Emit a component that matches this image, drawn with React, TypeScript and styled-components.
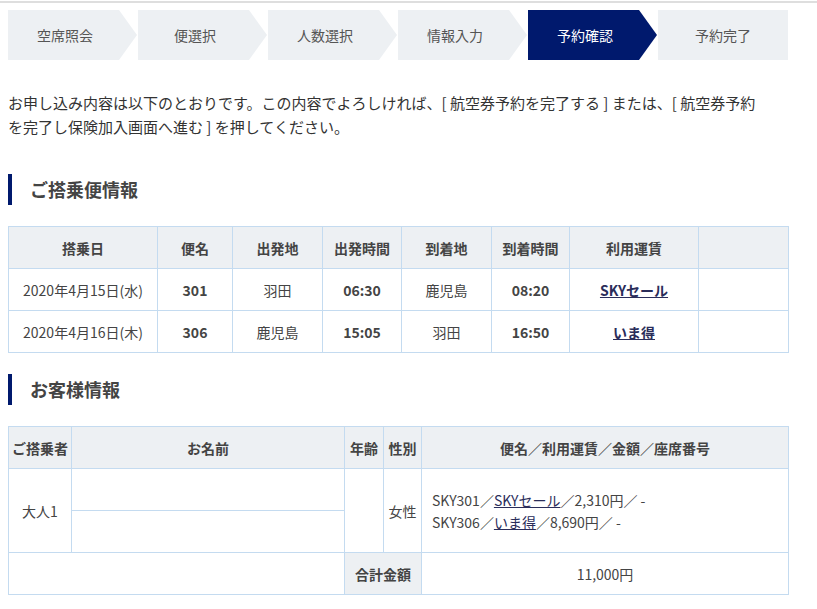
import styled, { createGlobalStyle } from 'styled-components'

const GlobalStyle = createGlobalStyle`
  body {
    margin: 0;
    background: #fff;
    font-family: 'Noto Sans CJK JP', 'Liberation Sans', sans-serif;
    color: #333;
  }
`

const Page = styled.div`
  margin-top: 1px;
  border-top: 2px solid #dedede;
  padding: 7px 8px 20px;
`

const Steps = styled.ol`
  display: flex;
  list-style: none;
  margin: 0;
  padding: 0;
  width: 780px;
`

const Step = styled.li<{ $active?: boolean; $last?: boolean }>`
  flex: 0 0 130px;
  height: 50px;
  line-height: 50px;
  padding-right: ${p => (p.$last ? 0 : 16)}px;
  box-sizing: border-box;
  text-align: center;
  font-size: 14px;
  background: ${p => (p.$active ? '#00196d' : '#edf0f3')};
  color: ${p => (p.$active ? '#fff' : '#555')};
  clip-path: ${p =>
    p.$last
      ? 'none'
      : 'polygon(0 0, calc(100% - 19px) 0, calc(100% - 1px) 50%, calc(100% - 19px) 100%, 0 100%)'};
`

const Lead = styled.p`
  margin: 31px 0 0;
  width: 780px;
  font-size: 15px;
  line-height: 24px;
  color: #333;
`

const Heading = styled.h2`
  margin: 35px 0 21px;
  height: 31px;
  line-height: 31px;
  border-left: 4px solid #00196d;
  padding-left: 18px;
  font-size: 18px;
  font-weight: bold;
  color: #444;
`

const Table = styled.table`
  width: 780px;
  border-collapse: collapse;
  table-layout: fixed;
  border: 1px solid #c4dbf0;
  font-size: 14px;
  & + h2 {
    margin-top: 21px;
  }
`

const Th = styled.th`
  height: 41px;
  padding: 0;
  background: #edf0f3;
  border: 1px solid #c4dbf0;
  font-weight: bold;
  color: #444;
  text-align: center;
  white-space: nowrap;
`

const Td = styled.td<{ $bold?: boolean; $left?: boolean }>`
  height: 41px;
  padding: ${p => (p.$left ? '0 10px' : '0')};
  border: 1px solid #c4dbf0;
  text-align: ${p => (p.$left ? 'left' : 'center')};
  font-weight: ${p => (p.$bold ? 'bold' : 'normal')};
  color: #444;
  white-space: nowrap;
  line-height: 22px;
`

const FareLink = styled.a<{ $bold?: boolean }>`
  color: #2a2d5a;
  text-decoration: underline;
  font-weight: ${p => (p.$bold ? 'bold' : 'normal')};
`

const flights = [
  { date: '2020年4月15日(水)', no: '301', from: '羽田', dep: '06:30', to: '鹿児島', arr: '08:20', fare: 'SKYセール' },
  { date: '2020年4月16日(木)', no: '306', from: '鹿児島', dep: '15:05', to: '羽田', arr: '16:50', fare: 'いま得' },
]

const steps = ['空席照会', '便選択', '人数選択', '情報入力', '予約確認', '予約完了']

export default function App() {
  return (
    <Page>
      <GlobalStyle />
      <Steps>
        {steps.map((s, i) => (
          <Step key={s} $active={i === 4} $last={i === steps.length - 1}>
            {s}
          </Step>
        ))}
      </Steps>

      <Lead>
        お申し込み内容は以下のとおりです。この内容でよろしければ、[ 航空券予約を完了する ] または、[ 航空券予約
        <br />
        を完了し保険加入画面へ進む ] を押してください。
      </Lead>

      <Heading>ご搭乗便情報</Heading>
      <Table>
        <colgroup>
          <col style={{ width: 149 }} />
          <col style={{ width: 75 }} />
          <col style={{ width: 90 }} />
          <col style={{ width: 79 }} />
          <col style={{ width: 90 }} />
          <col style={{ width: 78 }} />
          <col style={{ width: 129 }} />
          <col style={{ width: 90 }} />
        </colgroup>
        <thead>
          <tr>
            <Th>搭乗日</Th>
            <Th>便名</Th>
            <Th>出発地</Th>
            <Th>出発時間</Th>
            <Th>到着地</Th>
            <Th>到着時間</Th>
            <Th>利用運賃</Th>
            <Th />
          </tr>
        </thead>
        <tbody>
          {flights.map(f => (
            <tr key={f.no}>
              <Td>{f.date}</Td>
              <Td $bold>{f.no}</Td>
              <Td>{f.from}</Td>
              <Td $bold>{f.dep}</Td>
              <Td>{f.to}</Td>
              <Td $bold>{f.arr}</Td>
              <Td>
                <FareLink href="#" $bold>
                  {f.fare}
                </FareLink>
              </Td>
              <Td />
            </tr>
          ))}
        </tbody>
      </Table>

      <Heading>お客様情報</Heading>
      <Table>
        <colgroup>
          <col style={{ width: 63 }} />
          <col style={{ width: 273 }} />
          <col style={{ width: 39 }} />
          <col style={{ width: 38 }} />
          <col style={{ width: 367 }} />
        </colgroup>
        <thead>
          <tr>
            <Th>ご搭乗者</Th>
            <Th>お名前</Th>
            <Th>年齢</Th>
            <Th>性別</Th>
            <Th>便名／利用運賃／金額／座席番号</Th>
          </tr>
        </thead>
        <tbody>
          <tr>
            <Td rowSpan={2}>大人1</Td>
            <Td />
            <Td rowSpan={2} />
            <Td rowSpan={2}>女性</Td>
            <Td rowSpan={2} $left>
              SKY301／<FareLink href="#">SKYセール</FareLink>／2,310円／ -
              <br />
              SKY306／<FareLink href="#">いま得</FareLink>／8,690円／ -
            </Td>
          </tr>
          <tr>
            <Td />
          </tr>
          <tr>
            <Td colSpan={2} />
            <Th colSpan={2}>合計金額</Th>
            <Td>11,000円</Td>
          </tr>
        </tbody>
      </Table>
    </Page>
  )
}
